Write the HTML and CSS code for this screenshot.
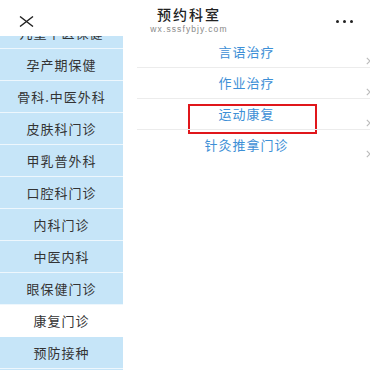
FILE: index.html
```html
<!DOCTYPE html>
<html lang="zh">
<head>
<meta charset="utf-8">
<title>预约科室</title>
<link rel="stylesheet" href="styles.css">
</head>
<body>
<div class="page">
  <header class="topbar">
    <span class="close">
      <svg width="15" height="11" viewBox="0 0 15 11"><path d="M1 0.5 L14 10.5 M14 0.5 L1 10.5" stroke="#222" stroke-width="1.4" fill="none"/></svg>
    </span>
    <div class="titles">
      <div class="title">预约科室</div>
      <div class="subtitle">wx.sssfybjy.com</div>
    </div>
    <span class="more"><i></i><i></i><i></i></span>
  </header>
  <main class="content">
    <nav class="sidebar">
      <ul class="dept-list">
        <li class="dept">儿童中医保健</li>
        <li class="dept">孕产期保健</li>
        <li class="dept">骨科.中医外科</li>
        <li class="dept">皮肤科门诊</li>
        <li class="dept">甲乳普外科</li>
        <li class="dept">口腔科门诊</li>
        <li class="dept">内科门诊</li>
        <li class="dept">中医内科</li>
        <li class="dept">眼保健门诊</li>
        <li class="dept active">康复门诊</li>
        <li class="dept">预防接种</li>
      </ul>
    </nav>
    <section class="clinics">
      <div class="clinic"><span>言语治疗</span><svg class="chev" width="5" height="8" viewBox="0 0 5 8"><path d="M0.8 0.8 L4 4 L0.8 7.2" stroke="#bbb" stroke-width="1.1" fill="none"/></svg></div>
      <div class="clinic"><span>作业治疗</span><svg class="chev" width="5" height="8" viewBox="0 0 5 8"><path d="M0.8 0.8 L4 4 L0.8 7.2" stroke="#bbb" stroke-width="1.1" fill="none"/></svg></div>
      <div class="clinic marked"><span>运动康复</span><svg class="chev" width="5" height="8" viewBox="0 0 5 8"><path d="M0.8 0.8 L4 4 L0.8 7.2" stroke="#bbb" stroke-width="1.1" fill="none"/></svg></div>
      <div class="clinic last"><span>针灸推拿门诊</span><svg class="chev" width="5" height="8" viewBox="0 0 5 8"><path d="M0.8 0.8 L4 4 L0.8 7.2" stroke="#bbb" stroke-width="1.1" fill="none"/></svg></div>
    </section>
  </main>
</div>
</body>
</html>
```
FILE: styles.css
```css
* { box-sizing: border-box; }
html, body { margin: 0; padding: 0; background: #fff; }
body {
  width: 370px;
  height: 370px;
  overflow: hidden;
  font-family: "Noto Sans CJK SC", "Noto Sans", sans-serif;
}
.page { display: flex; flex-direction: column; height: 370px; }

.topbar {
  height: 36px;
  flex: none;
  display: flex;
  align-items: flex-start;
  justify-content: space-between;
  background: #fff;
}
.close { margin: 16px 0 0 19px; width: 15px; height: 11px; display: block; line-height: 0; }
.titles { display: flex; flex-direction: column; align-items: center; margin-left: 8px; }
.title {
  margin-top: 7px;
  font-size: 14px;
  line-height: 15px;
  letter-spacing: 2px;
  color: #222;
  font-weight: 500;
}
.subtitle {
  margin-top: 3px;
  font-family: "Liberation Sans", sans-serif;
  font-size: 8.5px;
  line-height: 8px;
  letter-spacing: 1.1px;
  color: #888;
}
.more { display: flex; gap: 4px; margin: 20px 17px 0 0; }
.more i { display: block; width: 3px; height: 3px; border-radius: 50%; background: #222; }

.content { flex: 1; display: flex; min-height: 0; }

.sidebar {
  width: 123px;
  flex: none;
  background: #c6e5f8;
  overflow: hidden;
}
.dept-list { list-style: none; margin: -19px 0 0; padding: 0; }
.dept {
  height: 32px;
  line-height: 31px;
  border-bottom: 1px solid #eef7fd;
  text-align: center;
  font-size: 13px;
  letter-spacing: 1px;
  color: #333;
  white-space: nowrap;
}
.dept.active { background: #fff; border-bottom-color: #fff; }

.clinics { flex: 1; padding-top: 1px; }
.clinic {
  position: relative;
  height: 31px;
  line-height: 30px;
  text-align: center;
  font-size: 13px;
  letter-spacing: 1px;
  color: #3d8fd6;
}
.clinic::after {
  content: "";
  position: absolute;
  left: 14px;
  right: 0;
  bottom: 0;
  height: 1px;
  background: #ececec;
}
.clinic.last::after { display: none; }
.chev { position: absolute; right: -1px; top: 20px; }
.clinic.marked::before {
  content: "";
  position: absolute;
  left: 65px;
  top: 5px;
  width: 125px;
  height: 26px;
  border: 2px solid #e0161b;
}
```
